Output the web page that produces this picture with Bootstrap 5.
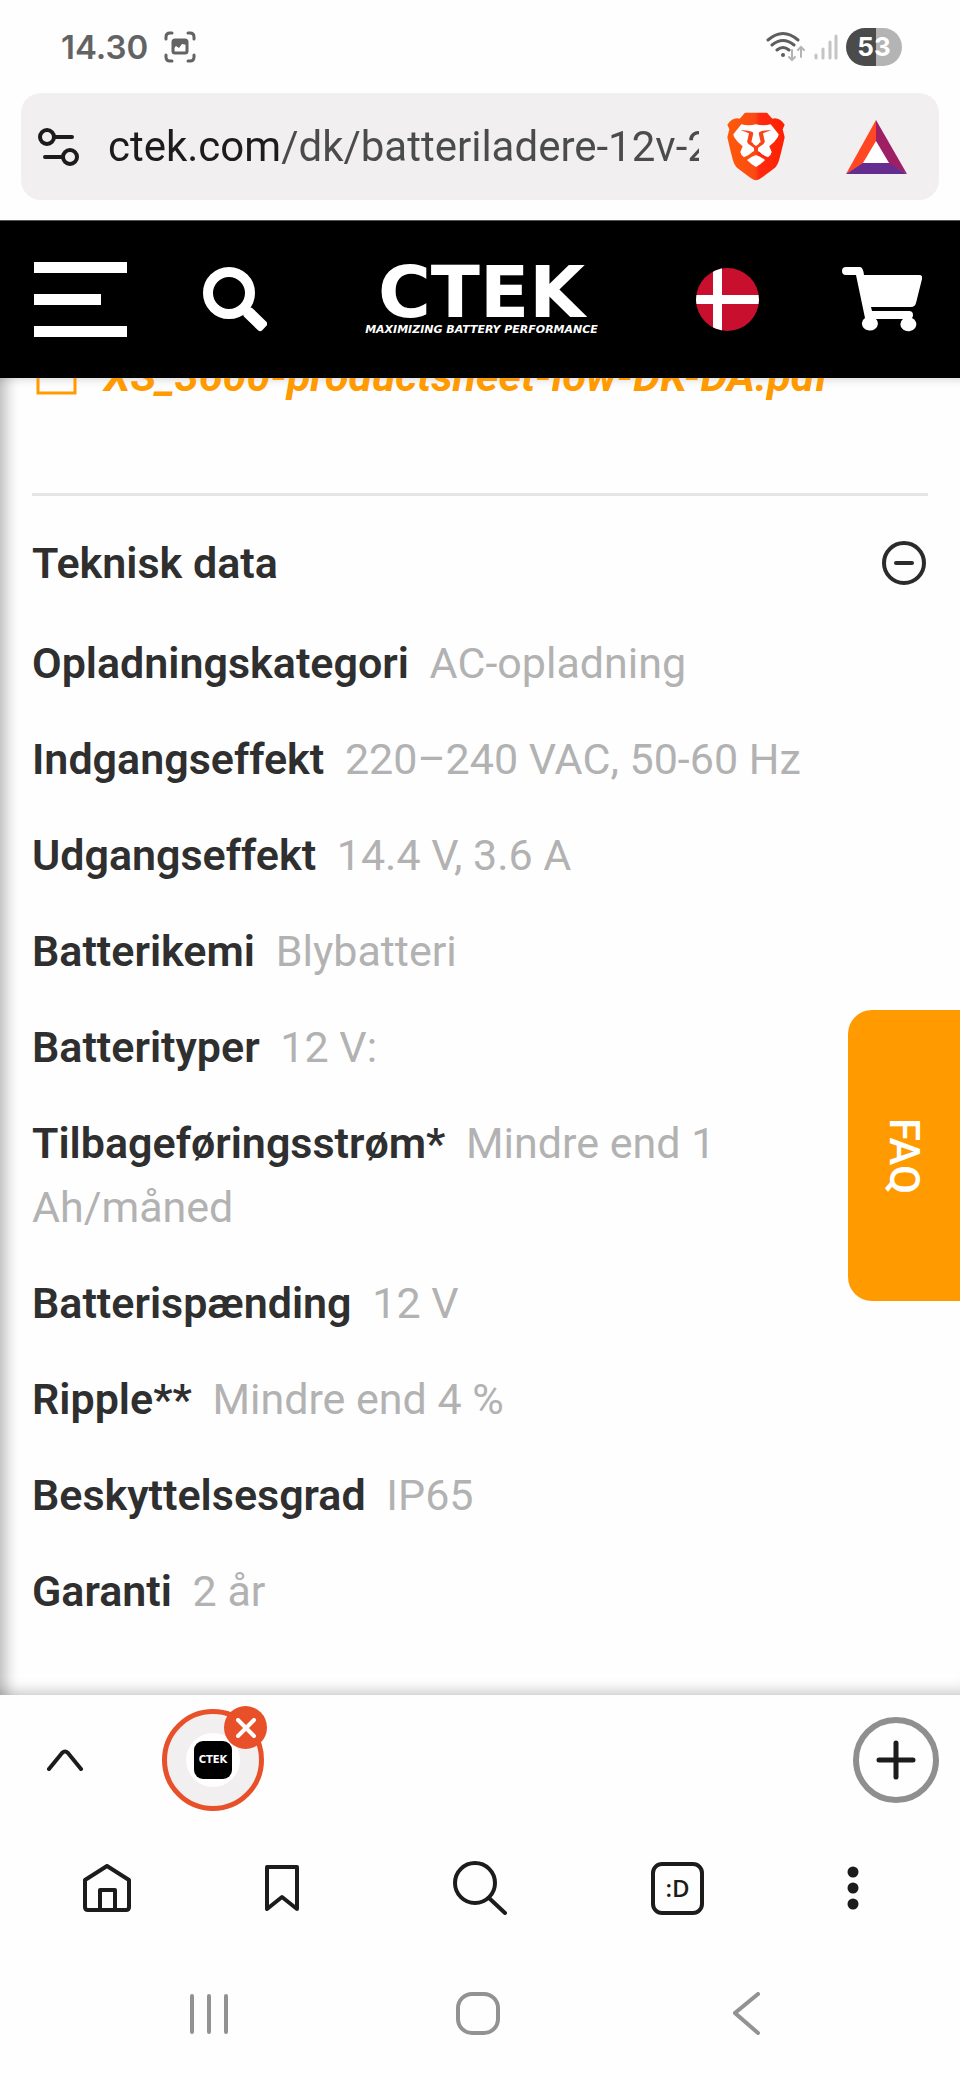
<!DOCTYPE html>
<html lang="da">
<head>
<meta charset="utf-8">
<meta name="viewport" content="width=device-width, initial-scale=1">
<title>CTEK – Teknisk data</title>
<link href="https://cdn.jsdelivr.net/npm/bootstrap@5.3.0/dist/css/bootstrap.min.css" rel="stylesheet">
<style>
  :root { --ink: #2f2f2f; --muted: #b2b2b2; --orange: #ff9a00; --chrome-ink: #1c1c1c; }
  body { font-family: Roboto, "Liberation Sans", sans-serif; background: #fefefe; color: var(--ink); }
  svg { display: block; flex: none; }
  .plain { background: none; border: 0; padding: 0; color: inherit; display: flex; align-items: center; justify-content: center; }

  /* phone status bar */
  .statusbar { height: 93px; padding: 0 58px 0 61px; color: #636363; font-family: Inter, sans-serif; }
  .clock { font-size: 33px; line-height: 40px; font-weight: 600; }
  .battery { width: 56px; height: 38px; border-radius: 19px; font-size: 26px; font-weight: 700; line-height: 38px;
             background: linear-gradient(to right, #4b4b4b 30px, #b4b4b4 30px); color: #fff; }

  /* address bar */
  .address { margin: 0 21px 20px; height: 107px; padding: 0 32px 0 17px; border-radius: 20px; background: #f2eff0; }
  .url { min-width: 0; height: 64px; margin-left: 28px; padding: 0; border: 0; font-size: 42px; line-height: 64px;
         background: linear-gradient(to right, #1c1c1c 173px, #4a4b4b 173px); -webkit-background-clip: text; background-clip: text;
         color: #4a4b4b; -webkit-text-fill-color: transparent; outline: 0; }
  .shields { margin-left: 28px; }
  .rewards { margin-left: 61px; }

  /* site header */
  .site-header { height: 158px; padding: 0 38px 0 34px; background: #000; color: #fff; border-top: 1px solid #555; z-index: 3; }
  .site-search { margin-left: 76px; }
  .site-cart { margin-left: 83px; }
  .wordmark { font-family: "DejaVu Sans", sans-serif; font-weight: 700; color: #fff; }
  .wordmark-name { font-size: 72px; line-height: 60px; }
  .wordmark-tag { font-size: 11px; line-height: 16px; font-style: italic; }

  /* page */
  .page { padding: 0 32px 58px; font-size: 43px; line-height: 64px;
          box-shadow: inset 0 10px 8px -8px #0002, inset 0 -16px 14px -12px #0003, inset 16px 0 14px -10px #0004; }
  .download { margin-top: -34px; margin-bottom: 85px; gap: 27px; color: var(--orange); font-weight: 700; font-style: italic; }
  .download:hover { color: var(--orange); }
  .rule { height: 3px; margin: 0; border: 0; background: #e5e5e5; opacity: 1; }
  .section-head { padding: 35px 2px 0 0; margin-bottom: 36px; }
  .section-head h2 { font-size: 43px; line-height: 64px; font-weight: 600; }
  .specs { gap: 32px; padding-right: 32px; }
  .specs dt { display: inline; font-weight: 600; margin-right: 10px; }
  .specs dd { display: inline; color: var(--muted); margin: 0; }
  .faq { top: 48%; right: 0; width: 112px; height: 291px; border-radius: 24px 0 0 24px; background: var(--orange);
         color: #fff; font-size: 42px; line-height: 48px; font-weight: 500; }
  .faq span { writing-mode: vertical-rl; }

  /* browser bars */
  .tabs-row { height: 130px; padding: 0 21px 0 47px; color: var(--chrome-ink); }
  .tab-pill { width: 102px; height: 102px; margin-left: 79px; border: 5px solid #e8502a; border-radius: 50%; background: #f2eff0; }
  .tab-site { width: 54px; height: 54px; border-radius: 50%; background: #fff; }
  .tab-icon { width: 38px; height: 38px; border-radius: 9px; background: #000; color: #fff; font: 700 10px/38px "DejaVu Sans", sans-serif; }
  .tab-close { top: -8px; right: -8px; width: 43px; height: 43px; border-radius: 50%; background: #e8502a; }
  .new-tab { width: 86px; height: 86px; border: 6px solid #8f8f8f; border-radius: 50%; }
  .toolbar { display: grid; grid-template-columns: 4fr 4fr 5fr 4fr 4fr; height: 126px; padding: 0 19px; color: var(--chrome-ink); }
  .tab-count { width: 53px; height: 53px; border: 4px solid; border-radius: 11px; font: 600 24px/44px "Open Sans", sans-serif; }
  .system-nav { display: grid; grid-template-columns: repeat(3, 1fr); height: 129px; padding: 0 79px 4px 74px; color: #929292; }
</style>
</head>
<body>
<div class="d-flex flex-column min-vh-100">

  <div class="statusbar d-flex align-items-center">
    <span class="clock">14.30</span>
    <svg class="ms-3" width="32" height="32" viewBox="0 0 32 32" fill="none" stroke="currentColor" stroke-width="3" stroke-linecap="round">
      <path d="M2 8V6q0-4 4-4h2M24 2h2q4 0 4 4v2M30 24v2q0 4-4 4h-2M8 30H6q-4 0-4-4v-2"/>
      <rect x="9" y="9" width="14" height="13" rx="2"/><path d="M9 9h14v5l-5-1-3 4-3-2-3 3z" fill="currentColor" stroke="none"/>
    </svg>
    <div class="ms-auto d-flex align-items-center">
      <svg width="40" height="32" viewBox="0 0 40 32" fill="none" stroke-linecap="round">
        <g stroke="#5e5e5e" stroke-width="3"><path d="M2 9q15-13 30 0M6 14q11-9 22 0M11 19q6-5 12 0"/></g>
        <circle cx="17" cy="24" r="2" fill="#5e5e5e"/>
        <g stroke="#b4b4b4" stroke-width="2"><path d="M26 19v10M23 26l3 3 3-3M35 26V16M32 19l3-3 3 3"/></g>
      </svg>
      <svg class="ms-2" width="24" height="26" viewBox="0 0 24 26" stroke="#c4c4c4" stroke-width="3" stroke-linecap="round"><path d="M2 21v3M9 15v9M16 8v16M22 2v22"/></svg>
      <span class="battery text-center ms-2">53</span>
    </div>
  </div>

  <div class="address d-flex align-items-center">
    <button class="plain" aria-label="Sideoplysninger">
      <svg width="42" height="40" viewBox="0 0 42 40" fill="none" stroke="#1c1c1c" stroke-width="4" stroke-linecap="round"><circle cx="9" cy="10" r="7"/><path d="M17 10h17M7 30h16"/><circle cx="32" cy="30" r="7"/></svg>
    </button>
    <input class="url flex-grow-1" type="text" aria-label="Adresse" value="ctek.com/dk/batteriladere-12v-24v">
    <button class="plain shields" aria-label="Brave Shields">
      <svg width="58" height="69" viewBox="742 336 174 207">
        <defs><linearGradient id="lionFill"><stop offset="0" stop-color="#ff5a0a"/><stop offset=".48" stop-color="#fb4a12"/><stop offset=".56" stop-color="#ff2a10"/><stop offset="1" stop-color="#ff2000"/></linearGradient></defs>
        <path fill="url(#lionFill)" d="M796 338h66l16 18q20-6 37 18l-6 14 6 24q-7 32-15 62-5 22-16 31l-36 27q-12 9-19 9t-19-9l-36-27q-11-9-16-31-8-30-15-62l6-24-6-14q17-24 37-18z"/>
        <path fill="#fff" d="M785 373q22 6 44 0 22 6 44 0l24 30q0 8-13 22l-15 14 7 17q-2 11-11 16-13-4-25-16l-11-6-11 6q-12 12-25 16-9-5-11-16l7-17-15-14q-13-14-13-22z"/>
        <path fill="#fff" d="M829 465q14 4 27 15-12 13-27 21-15-8-27-21 13-11 27-15z"/>
        <path fill="#f9441a" d="M783 391q18-2 34 4 5 3 3 9l-5 22 14 9 14-9-5-22q-2-6 3-9 16-6 34-4-14 4-25 9l5 22q3 8-12 16l-8 6v11l-6 5-6-5v-11l-8-6q-15-8-12-16l5-22q-11-5-25-9z"/>
        <path fill="#fff" d="M825 393h8l5 38-9 7-9-7z"/>
      </svg>
    </button>
    <button class="plain rewards" aria-label="Brave Rewards">
      <svg width="61" height="54" viewBox="0 0 61 54"><path fill="#ff4724" d="M30 0v22L17 44 0 54z"/><path fill="#9e1f63" d="M30 0l31 54-18-10L30 22z"/><path fill="#662d91" d="M17 43h26l18 11H0z"/><path fill="#fff" d="M30 21l13 22H17z"/></svg>
    </button>
  </div>

  <header class="site-header d-flex align-items-center position-relative">
    <button class="plain" aria-label="Menu"><svg width="93" height="75" viewBox="0 0 93 75" fill="#fff"><path d="M0 0h93v11H0zM0 32h67v11H0zM0 64h93v11H0z"/></svg></button>
    <button class="plain site-search" aria-label="Søg">
      <svg width="64" height="65" viewBox="0 0 64 65"><circle cx="26" cy="26" r="21" fill="none" stroke="#fff" stroke-width="10"/><rect x="40" y="46" width="25" height="12" rx="3" fill="#fff" transform="rotate(44 52 52)"/></svg>
    </button>
    <a class="wordmark mx-auto text-decoration-none d-flex flex-column align-items-center" href="#">
      <span class="wordmark-name">CTEK</span>
      <span class="wordmark-tag text-nowrap">MAXIMIZING BATTERY PERFORMANCE</span>
    </a>
    <button class="plain" aria-label="Danmark">
      <svg width="63" height="63" viewBox="0 0 63 63"><defs><clipPath id="flagRound"><circle cx="31.5" cy="31.5" r="31.5"/></clipPath></defs><g clip-path="url(#flagRound)"><path fill="#c8102e" d="M0 0h63v63H0z"/><path fill="#fff" d="M17 0h9v63h-9zM0 27h63v9H0z"/></g></svg>
    </button>
    <a class="site-cart" href="#" aria-label="Kurv">
      <svg width="80" height="65" viewBox="0 0 80 65" fill="#fff"><path d="M4 0h14q3 0 4 8h55q4 0 3 4l-6 24q-1 4-5 4H29l1 4h37q4 0 4 4 0 2-1 3a8 7 0 1 1-9 1H34a8 7 0 1 1-11-1L14 8H4Q0 8 0 4t4-4z"/></svg>
    </a>
  </header>

  <main class="page flex-grow-1 position-relative">
    <a class="download d-flex align-items-center text-decoration-none" href="#">
      <svg class="ms-1" width="41" height="38" viewBox="0 0 41 38" fill="none" stroke="currentColor" stroke-width="3"><path d="M2 2h37v34H2z"/></svg>
      <span class="text-nowrap">XS_3600-productsheet-low-DK-DA.pdf</span>
    </a>
    <hr class="rule">
    <div class="section-head d-flex align-items-center justify-content-between">
      <h2 class="m-0">Teknisk data</h2>
      <button class="plain" aria-label="Luk Teknisk data"><svg width="44" height="44" viewBox="0 0 44 44" fill="none" stroke="#2b2b2b" stroke-width="4" stroke-linecap="round"><circle cx="22" cy="22" r="20"/><path d="M14 22h16"/></svg></button>
    </div>
    <dl class="specs d-flex flex-column m-0">
      <div><dt>Opladningskategori</dt> <dd>AC-opladning</dd></div>
      <div><dt>Indgangseffekt</dt> <dd>220–240 VAC, 50-60 Hz</dd></div>
      <div><dt>Udgangseffekt</dt> <dd>14.4 V, 3.6 A</dd></div>
      <div><dt>Batterikemi</dt> <dd>Blybatteri</dd></div>
      <div><dt>Batterityper</dt> <dd>12 V:</dd></div>
      <div><dt>Tilbageføringsstrøm*</dt> <dd>Mindre end 1 Ah/måned</dd></div>
      <div><dt>Batterispænding</dt> <dd>12 V</dd></div>
      <div><dt>Ripple**</dt> <dd>Mindre end 4 %</dd></div>
      <div><dt>Beskyttelsesgrad</dt> <dd>IP65</dd></div>
      <div><dt>Garanti</dt> <dd>2 år</dd></div>
    </dl>
    <button class="faq plain position-absolute"><span>FAQ</span></button>
  </main>

  <div class="tabs-row d-flex align-items-center">
    <button class="plain" aria-label="Vis faner"><svg width="36" height="22" viewBox="0 0 36 22" fill="none" stroke="currentColor" stroke-width="4" stroke-linecap="round"><path d="M2 20L15 4q3-3 6 0l13 16"/></svg></button>
    <div class="tab-pill position-relative d-flex align-items-center justify-content-center">
      <span class="tab-site d-flex align-items-center justify-content-center"><span class="tab-icon text-center">CTEK</span></span>
      <button class="tab-close plain position-absolute" aria-label="Luk fane"><svg width="20" height="20" viewBox="0 0 20 20" stroke="#fff" stroke-width="4" stroke-linecap="round"><path d="M2 2l16 16M18 2L2 18"/></svg></button>
    </div>
    <button class="new-tab plain ms-auto" aria-label="Ny fane"><svg width="40" height="40" viewBox="0 0 40 40" stroke="currentColor" stroke-width="5" stroke-linecap="round"><path d="M20 3v34M3 20h34"/></svg></button>
  </div>

  <nav class="toolbar" aria-label="Browser">
    <button class="plain" aria-label="Hjem"><svg width="48" height="48" viewBox="0 0 48 48" fill="none" stroke="currentColor" stroke-width="4" stroke-linejoin="round"><path d="M24 2l22 14v27q0 3-3 3H5q-3 0-3-3V16zM17 46V26h15v20"/></svg></button>
    <button class="plain" aria-label="Bogmærker"><svg width="34" height="48" viewBox="0 0 34 48" fill="none" stroke="currentColor" stroke-width="4" stroke-linejoin="round"><path d="M2 3h30v42L17 33 2 45z"/></svg></button>
    <button class="plain" aria-label="Søg"><svg width="54" height="54" viewBox="0 0 54 54" fill="none" stroke="currentColor" stroke-width="4" stroke-linecap="round"><circle cx="22" cy="22" r="20"/><path d="M36 37l16 15"/></svg></button>
    <button class="plain" aria-label="Faner"><span class="tab-count">:D</span></button>
    <button class="plain" aria-label="Flere"><svg width="12" height="44" viewBox="0 0 12 44" fill="currentColor"><circle cx="6" cy="6" r="5.500"/><circle cx="6" cy="22" r="5.500"/><circle cx="6" cy="38" r="5.500"/></svg></button>
  </nav>

  <nav class="system-nav" aria-label="System">
    <button class="plain" aria-label="Seneste"><svg width="38" height="40" viewBox="0 0 38 40" stroke="currentColor" stroke-width="4" stroke-linecap="round"><path d="M2 2v36M19 2v36M36 2v36"/></svg></button>
    <button class="plain" aria-label="Startskærm"><svg width="44" height="43" viewBox="0 0 44 43" fill="none" stroke="currentColor" stroke-width="4"><rect x="2" y="2" width="40" height="39" rx="14"/></svg></button>
    <button class="plain" aria-label="Tilbage"><svg width="27" height="43" viewBox="0 0 27 43" fill="none" stroke="currentColor" stroke-width="4" stroke-linecap="round"><path d="M25 2L2 21l23 20"/></svg></button>
  </nav>
</div>
<script src="https://cdn.jsdelivr.net/npm/bootstrap@5.3.0/dist/js/bootstrap.bundle.min.js"></script>
</body>
</html>
